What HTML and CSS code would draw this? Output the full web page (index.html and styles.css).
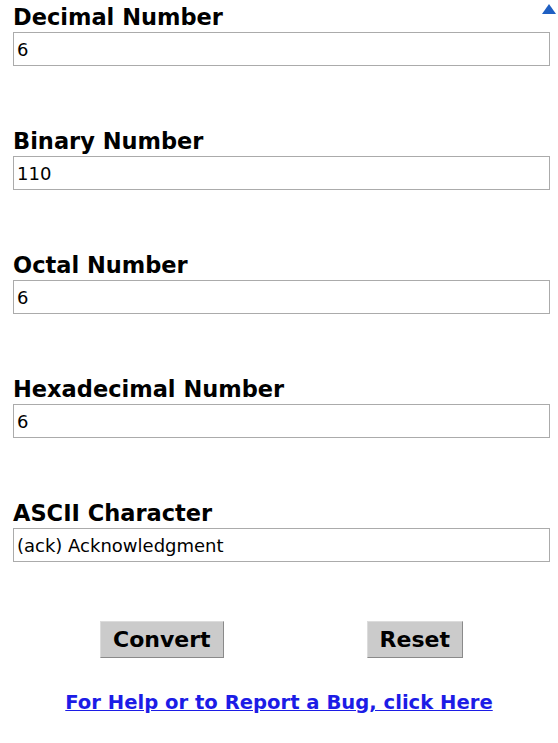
FILE: index.html
```html
<!DOCTYPE html>
<html>
<head>
<meta charset="utf-8">
<link rel="stylesheet" href="styles.css">
</head>
<body>
<form class="converter">
  <a class="top-arrow" href="#" aria-label="Top"><svg width="14" height="10" viewBox="0 0 14 10"><polygon points="7,0 14,10 0,10" fill="#1f5fc2"/></svg></a>
  <div class="fields">
    <div class="field">
      <label class="field-label" for="dec">Decimal Number</label>
      <input class="field-input" id="dec" type="text" value="6">
    </div>
    <div class="field">
      <label class="field-label" for="bin">Binary Number</label>
      <input class="field-input" id="bin" type="text" value="110">
    </div>
    <div class="field">
      <label class="field-label" for="oct">Octal Number</label>
      <input class="field-input" id="oct" type="text" value="6">
    </div>
    <div class="field">
      <label class="field-label" for="hex">Hexadecimal Number</label>
      <input class="field-input" id="hex" type="text" value="6">
    </div>
    <div class="field">
      <label class="field-label" for="asc">ASCII Character</label>
      <input class="field-input" id="asc" type="text" value="(ack) Acknowledgment">
    </div>
  </div>
  <div class="actions">
    <button class="btn" type="button">Convert</button>
    <button class="btn" type="reset">Reset</button>
  </div>
  <p class="help"><a class="help-link" href="#">For Help or to Report a Bug, click Here</a></p>
</form>
</body>
</html>
```
FILE: styles.css
```css
html, body {
  margin: 0;
  padding: 0;
  background: #ffffff;
}
body {
  font-family: "DejaVu Sans", Verdana, sans-serif;
  color: #000;
}
.converter {
  position: relative;
  padding: 4px 8px 0 13px;
  display: flex;
  flex-direction: column;
}
.top-arrow {
  position: absolute;
  top: 4px;
  right: 2px;
  line-height: 0;
}
.fields {
  display: flex;
  flex-direction: column;
  gap: 62px;
}
.field {
  display: flex;
  flex-direction: column;
}
.field-label {
  font-size: 22.5px;
  font-weight: bold;
  line-height: 26px;
  margin-bottom: 2px;
}
.field-input {
  box-sizing: border-box;
  width: 537px;
  height: 34px;
  margin: 0;
  padding: 0 3px;
  border: 1px solid #ababab;
  border-radius: 0;
  font-family: "DejaVu Sans", Verdana, sans-serif;
  font-size: 18px;
  color: #000;
  background: #fff;
  outline: none;
}
.actions {
  display: flex;
  gap: 143px;
  padding-left: 87px;
  margin-top: 59px;
}
.btn {
  box-sizing: border-box;
  height: 37px;
  padding: 0 12px;
  font-family: "DejaVu Sans", Verdana, sans-serif;
  font-size: 22px;
  font-weight: bold;
  color: #000;
  background: #cbcbcb;
  border: 1px solid;
  border-color: #dcdcdc #8a8a8a #8a8a8a #dcdcdc;
  border-radius: 0;
}
.help {
  margin: 33px 0 0 -13px;
  width: 558px;
  text-align: center;
  font-size: 19.6px;
  font-weight: bold;
  line-height: 24px;
}
.help-link {
  color: #1c1ce6;
  text-decoration: underline;
}
```
